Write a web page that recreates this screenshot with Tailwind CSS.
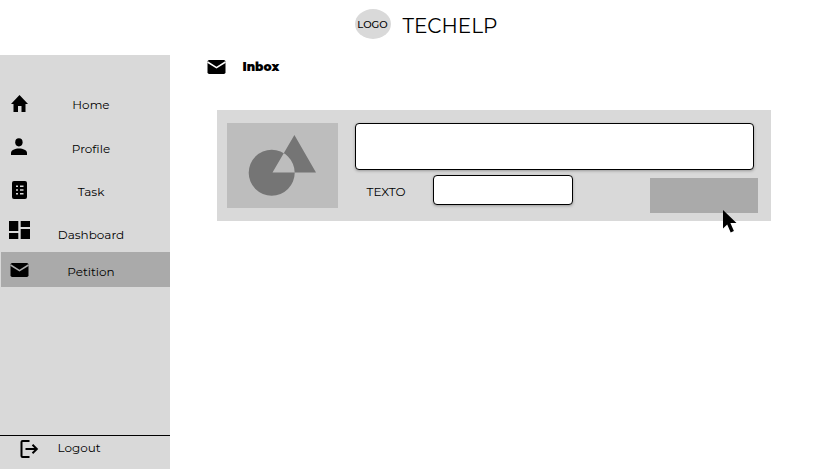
<!DOCTYPE html>
<html lang="en">
<head>
<meta charset="utf-8">
<title>Techelp</title>
<script src="https://cdn.jsdelivr.net/npm/@tailwindcss/browser@4"></script>
</head>
<body class="bg-white w-[834px] h-[469px] overflow-hidden flex flex-col text-black font-['Montserrat','Inter',sans-serif]">
<header class="h-[55px] shrink-0 flex items-start pl-[355px] pt-[9px]">
  <div class="w-9 h-[30px] rounded-[50%] bg-[#d9d9d9] flex items-center justify-center text-[10px] leading-[30px] font-medium"><span class="-ml-px mt-px">LOGO</span></div>
  <h1 class="ml-[11.500px] mt-[2px] text-[20px] leading-[30px] font-normal">TECHELP</h1>
</header>
<div class="flex flex-1 min-h-0">
  <aside class="w-[170px] shrink-0 bg-[#d9d9d9] flex flex-col text-[12px] font-normal">
    <nav class="flex flex-col flex-1 pt-7">
      <a class="grid grid-cols-[40px_102px] h-11 items-center">
        <svg class="w-[18px] h-[17px] ml-[10px] -mt-[3px]" viewBox="0 0 18 17"><path d="M8 17v-6h3.500v6h4V9H18L9.500 0 1 9h2.500v8z"/></svg>
        <span class="text-center">Home</span>
      </a>
      <a class="grid grid-cols-[40px_102px] h-[43px] items-center">
        <svg class="w-4 h-[17px] ml-[11.400px] -mt-[4px]" viewBox="0 0 16 17"><ellipse cx="7.900" cy="4.300" rx="3.700" ry="4.100"/><path d="M0 17v-2c0-3 4-4.600 8-4.600s8 1.600 8 4.600v2z"/></svg>
        <span class="text-center">Profile</span>
      </a>
      <a class="grid grid-cols-[40px_102px] h-[43px] items-center">
        <svg class="w-[15px] h-[18px] ml-[12px] -mt-[3px]" viewBox="0 0 15 18"><rect width="15" height="18" rx="2"/><path d="M4 5.300h2M8 5.300h3.500M4 9h2M8 9h3.500M4 12.700h2M8 12.700h3.500" stroke="#d9d9d9" stroke-width="1.600"/></svg>
        <span class="text-center">Task</span>
      </a>
      <a class="grid grid-cols-[40px_102px] h-[39px] items-start">
        <svg class="w-[21px] h-[18px] ml-[9px] mt-2" viewBox="0 0 21 18"><path d="M0 0h9.300v10H0zM0 12h9.300v6H0zM11.700 0H21v6h-9.300zM11.700 8H21v10h-9.300z"/></svg>
        <span class="text-center leading-[18px] mt-[13px]">Dashboard</span>
      </a>
      <a class="grid grid-cols-[39px_102px] h-[35px] ml-px items-center bg-[#aaa]">
        <svg class="w-[19px] h-[14px] ml-[9px]" viewBox="-0.500 0 19 14"><rect width="18" height="14" rx="1.700"/><path d="M0 2 9 7.700 18 2" fill="none" stroke="#aaa" stroke-width="1.500"/></svg>
        <span class="text-center mt-[4px]">Petition</span>
      </a>
    </nav>
    <a class="h-[34px] border-t border-black flex items-start">
      <svg class="w-[19px] h-[18px] ml-[20px] mt-1" viewBox="0.500 0 19 18" fill="none" stroke="#000" stroke-width="2"><path d="M10 1H3Q2 1 2 2v14q0 1 1 1h7M6 9h11M13 4.800 17.300 9 13 13.200"/></svg>
      <span class="ml-[18.500px] mt-[3px] leading-[18px]">Logout</span>
    </a>
  </aside>
  <main class="flex-1">
    <div class="flex items-center h-6 pl-[37px]">
      <svg class="w-[19px] h-[14px]" viewBox="-0.500 0 19 14"><rect width="18" height="14" rx="1.700"/><path d="M0 2 9 7.700 18 2" fill="none" stroke="#fff" stroke-width="1.500"/></svg>
      <h2 class="ml-[16.500px] text-[12px] font-black">Inbox</h2>
    </div>
    <section class="relative ml-[47px] mt-[31px] w-[554px] h-[111px] bg-[#d9d9d9] flex pt-[13px] pl-[10px]">
      <svg class="w-[111px] h-[85px] shrink-0 bg-[#bdbdbd]" viewBox="0 0 111 85"><path fill="#757575" fill-rule="evenodd" d="M21.700 49.700a23 23 0 1 0 46 0a23 23 0 1 0-46 0zM45.500 49.500H89L67.400 12z"/></svg>
      <div class="ml-[17px] w-[403px]">
        <div class="w-[399px] h-[47px] bg-white border border-black rounded-[4px] shadow-[0_1px_3px_rgba(0,0,0,0.3)]"></div>
        <div class="flex mt-[5px]">
          <span class="w-[78px] pl-[11.500px] mt-2 text-[12px] leading-[18px] font-normal">TEXTO</span>
          <div class="w-[140px] h-[30px] bg-white border border-black rounded-[4px] shadow-[0_1px_3px_rgba(0,0,0,0.3)]"></div>
          <div class="ml-[77px] mt-[3px] w-[108px] h-[35px] shrink-0 bg-[#aaa]"></div>
        </div>
      </div>
      <svg class="absolute left-[506px] top-[100px] w-[14px] h-[23px]" viewBox="0 0 14 23"><path d="M0 0v18.500l4.200-4 3.500 8 3.200-1.400-3.500-8H13.500z"/></svg>
    </section>
  </main>
</div>
</body>
</html>
